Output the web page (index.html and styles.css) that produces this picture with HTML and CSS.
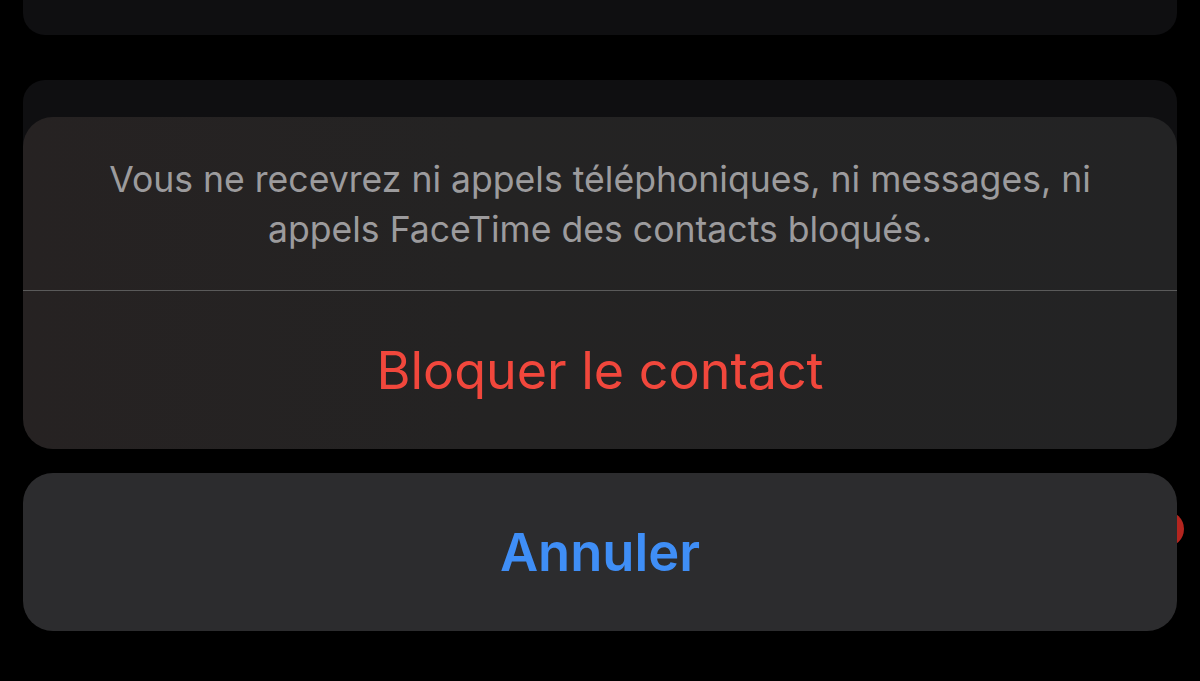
FILE: index.html
```html
<!DOCTYPE html>
<html lang="fr">
<head>
<meta charset="utf-8">
<link rel="stylesheet" href="styles.css">
</head>
<body>
<div class="screen">
  <div class="card card-top"></div>
  <div class="card card-under">
    <span class="badge"></span>
  </div>
  <div class="sheet">
    <div class="group">
      <div class="message">Vous ne recevrez ni appels téléphoniques, ni messages, ni appels FaceTime des contacts bloqués.</div>
      <div class="action destructive">Bloquer le contact</div>
    </div>
    <div class="cancel">Annuler</div>
  </div>
</div>
</body>
</html>
```

FILE: styles.css
```css
html, body {
  margin: 0;
  padding: 0;
  background: #000;
}
.screen {
  position: relative;
  width: 1200px;
  height: 681px;
  overflow: hidden;
  padding: 0 23px;
  box-sizing: border-box;
  font-family: Inter, "Noto Sans", "Liberation Sans", sans-serif;
}
.card {
  background: #0f0f11;
}
.card-top {
  height: 35px;
  border-radius: 0 0 22px 22px;
}
.card-under {
  position: relative;
  margin-top: 45px;
  height: 300px;
  border-radius: 22px 22px 0 0;
}
.badge {
  position: absolute;
  left: 1125px;
  top: 431px;
  width: 36px;
  height: 36px;
  border-radius: 50%;
  background: #b3251f;
}
.sheet {
  position: absolute;
  left: 23px;
  right: 23px;
  top: 117px;
  display: flex;
  flex-direction: column;
  gap: 24px;
}
.group {
  background: linear-gradient(90deg, #262222 0%, #242323 40%, #232324 100%);
  border-radius: 30px;
  overflow: hidden;
}
.message {
  height: 174px;
  box-sizing: border-box;
  padding: 38px 60px 0;
  text-align: center;
  color: #9c9b9d;
  font-size: 35.6px;
  line-height: 50px;
  border-bottom: 1px solid #5a5a5a;
}
.action {
  height: 158px;
  display: flex;
  align-items: center;
  justify-content: center;
  font-size: 52px;
  box-sizing: border-box;
}
.destructive {
  color: #f1473c;
}
.cancel {
  height: 158px;
  background: #2c2c2e;
  border-radius: 30px;
  display: flex;
  align-items: center;
  justify-content: center;
  color: #3f8ef6;
  font-size: 52.5px;
  font-weight: 600;
  box-sizing: border-box;
}
```
